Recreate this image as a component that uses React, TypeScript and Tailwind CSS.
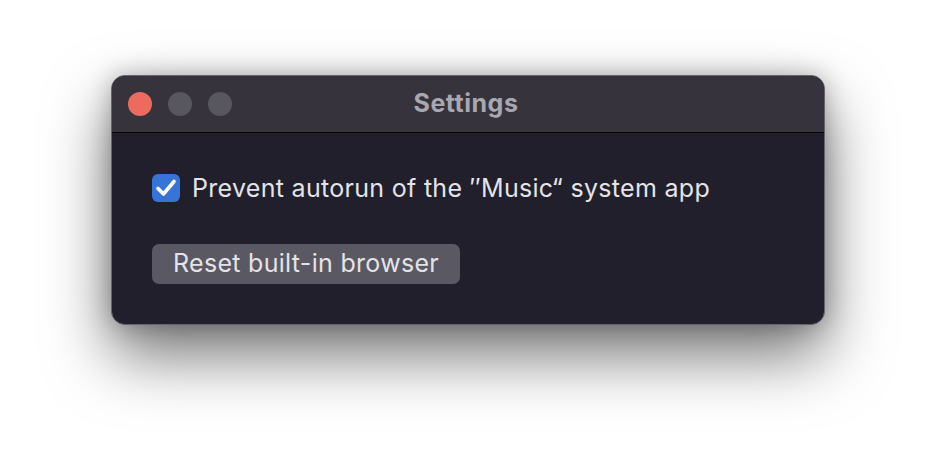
export default function App() {
  return (
    <div
      className="w-[936px] h-[472px] bg-white pt-[75px] pl-[111px]"
      style={{ fontFamily: 'Inter, "Noto Sans", sans-serif' }}
    >
      <div className="w-[714px] h-[250px] rounded-[14px] border border-[#66646c] bg-[#201f2b] overflow-hidden shadow-[0_30px_64px_rgba(0,0,0,0.55),0_0_24px_rgba(0,0,0,0.25)]">
        <div className="relative h-[57px] bg-[#36333d] border-b border-black flex items-center pl-[16px] gap-[16px]">
          <div className="w-[24px] h-[24px] rounded-full bg-[#ec6b5f]" />
          <div className="w-[24px] h-[24px] rounded-full bg-[#58565f]" />
          <div className="w-[24px] h-[24px] rounded-full bg-[#58565f]" />
          <div className="absolute inset-0 pr-[4px] flex items-center justify-center text-[25px] font-bold text-[#a9a7b0] tracking-[0.5px] pointer-events-none">
            Settings
          </div>
        </div>
        <div className="pl-[40px] pt-[41px]">
          <div className="flex items-center gap-[12px]">
            <div className="w-[28px] h-[28px] rounded-[6px] bg-[#3874d8] flex items-center justify-center">
              <svg width="28" height="28" viewBox="0 0 28 28" fill="none">
                <path
                  d="M6 14.5 L11.5 20 L22 7.5"
                  stroke="white"
                  strokeWidth="3.6"
                  strokeLinecap="round"
                  strokeLinejoin="round"
                />
              </svg>
            </div>
            <span className="text-[25px] tracking-[0.3px] text-[#e4e3e7] leading-none">
              Prevent autorun of the ″Music“ system app
            </span>
          </div>
          <button className="mt-[42px] w-[308px] h-[40px] rounded-[7px] bg-[#5a5862] text-[25px] tracking-[0.3px] text-[#e4e3e7] flex items-center justify-center">
            Reset built-in browser
          </button>
        </div>
      </div>
    </div>
  );
}
